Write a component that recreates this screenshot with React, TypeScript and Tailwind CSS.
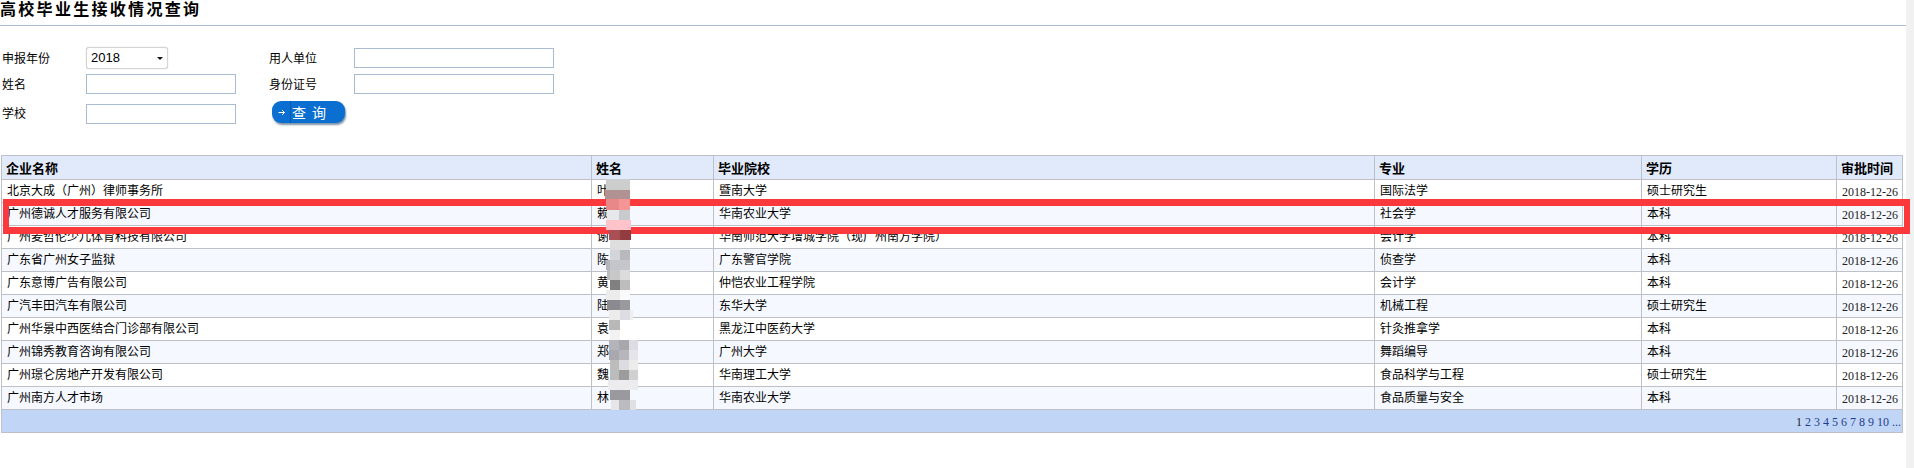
const FONT = "font-['Noto_Sans_CJK_SC','Liberation_Sans',sans-serif]";

const ROWS = [
  ['北京大成（广州）律师事务所', '叶', '暨南大学', '国际法学', '硕士研究生'],
  ['广州德诚人才服务有限公司', '赖', '华南农业大学', '社会学', '本科'],
  ['广州麦哲伦少儿体育科技有限公司', '谢', '华南师范大学增城学院（现广州南方学院）', '会计学', '本科'],
  ['广东省广州女子监狱', '陈', '广东警官学院', '侦查学', '本科'],
  ['广东意博广告有限公司', '黄', '仲恺农业工程学院', '会计学', '本科'],
  ['广汽丰田汽车有限公司', '陆', '东华大学', '机械工程', '硕士研究生'],
  ['广州华景中西医结合门诊部有限公司', '袁', '黑龙江中医药大学', '针灸推拿学', '本科'],
  ['广州锦秀教育咨询有限公司', '郑', '广州大学', '舞蹈编导', '本科'],
  ['广州璟仑房地产开发有限公司', '魏', '华南理工大学', '食品科学与工程', '硕士研究生'],
  ['广州南方人才市场', '林', '华南农业大学', '食品质量与安全', '本科'],
];

const HEADERS = ['企业名称', '姓名', '毕业院校', '专业', '学历', '审批时间'];

// mosaic over the names: [x, y, width, height, colour], page coordinates minus the svg origin (600,175)
const MOSAIC: [number, number, number, number, string][] = [
  [6, 4, 24, 11, '#cccdcd'],
  [5, 15, 25, 9, '#b09292'],
  [6, 24, 13, 11, '#e88888'],
  [19, 24, 11, 11, '#f59595'],
  [7, 35, 12, 10, '#e6e8ec'],
  [19, 35, 11, 10, '#c8cacd'],
  [6, 45, 25, 10, '#fcc4ca'],
  [9, 55, 11, 10, '#a85055'],
  [20, 55, 11, 10, '#923c40'],
  [10, 65, 20, 10, '#dedede'],
  [10, 75, 10, 10, '#d4d5da'],
  [20, 75, 10, 10, '#b8b9bc'],
  [6, 85, 4, 10, '#b4b4b9'],
  [10, 85, 20, 10, '#c5c6cc'],
  [7, 95, 3, 10, '#bbbbbb'],
  [10, 95, 10, 10, '#c8c8c8'],
  [20, 95, 10, 10, '#dcdcdc'],
  [10, 105, 10, 10, '#808080'],
  [20, 105, 10, 10, '#bdbdbd'],
  [6, 115, 14, 10, '#ececec'],
  [20, 115, 10, 10, '#fafafc'],
  [7, 125, 13, 10, '#8a8a90'],
  [20, 125, 10, 10, '#9a9a9e'],
  [9, 135, 11, 10, '#ececec'],
  [20, 135, 10, 10, '#dcdce2'],
  [30, 135, 3, 10, '#eeeeee'],
  [9, 145, 11, 10, '#b8b8b8'],
  [10, 155, 10, 10, '#f2f2f2'],
  [9, 165, 10, 10, '#b4b4ba'],
  [19, 165, 10, 10, '#a8a8ac'],
  [29, 165, 9, 10, '#dcdce2'],
  [9, 175, 10, 10, '#a8a8ae'],
  [19, 175, 10, 10, '#b6b6bc'],
  [29, 175, 9, 10, '#e4e4ea'],
  [10, 185, 9, 10, '#bcbcbc'],
  [19, 185, 10, 10, '#dcdce0'],
  [29, 185, 9, 10, '#ececec'],
  [10, 195, 9, 10, '#bcbcbc'],
  [19, 195, 10, 10, '#9c9c9c'],
  [29, 195, 9, 10, '#d0d0d0'],
  [8, 205, 30, 10, '#ececee'],
  [10, 215, 20, 10, '#9a9a9e'],
  [11, 225, 9, 10, '#e6e6e8'],
  [19, 225, 11, 10, '#bcbcc0'],
  [30, 225, 6, 10, '#dfe0e2'],
];

function Field({ className }: { className: string }) {
  return <input type="text" className={`h-5 border border-[#a9bcd3] bg-white ${className}`} />;
}

function Label({ text, className = '' }: { text: string; className?: string }) {
  return <span className={`self-center text-[12px] leading-none text-black ${className}`}>{text}</span>;
}

export default function App() {
  return (
    <div className={`relative flex h-[468px] w-[1914px] overflow-hidden bg-white ${FONT}`}>
      <div className="w-[1906px]">
        <h1 className="h-[26px] border-b border-[#a9bcd0] text-[16px] font-bold leading-[17px] tracking-[2.3px] text-black">
          高校毕业生接收情况查询
        </h1>

        <form className="mt-[21px] grid grid-cols-[84px_183px_85px_200px] grid-rows-[22px_20px_25px] gap-y-[5px] pl-[2px]">
          <Label text="申报年份" />
          <div className="relative h-[22px] w-[82px]">
            <select className="block h-full w-full appearance-none rounded-[3px] border border-[#d4d4d4] bg-white pl-[4px] font-['Liberation_Sans',sans-serif] text-[13px] text-black shadow-[0_0_1px_#bbbbbb]">
              <option>2018</option>
            </select>
            <svg className="pointer-events-none absolute right-[5px] top-[10px] h-[3px] w-[6px]" viewBox="0 0 6 3">
              <path d="M0 0h6L3 3z" fill="#111111" />
            </svg>
          </div>
          <Label text="用人单位" />
          <Field className="mt-px w-[200px]" />

          <Label text="姓名" />
          <Field className="w-[150px]" />
          <Label text="身份证号" />
          <Field className="w-[200px]" />

          <Label text="学校" className="pt-[3px]" />
          <Field className="w-[150px] self-end" />
          <div className="col-span-2 ml-[3px] self-start">
            <button
              type="button"
              className="mt-[2px] flex h-[22px] w-[73px] items-center rounded-[9px] bg-[#0a6fd1] text-white shadow-[1px_2px_2px_#7f93a6]"
            >
              <span className="flex h-full w-[19px] items-center justify-center border-r border-[#0658a8]">
                <svg className="h-[7px] w-[7px]" viewBox="0 0 7 7" fill="none" stroke="#ffffff" strokeWidth="1">
                  <path d="M0.5 3.5h6M4 1l2.5 2.5L4 6" />
                </svg>
              </span>
              <span className="pl-px text-[14px] leading-none tracking-[6px]">查询</span>
            </button>
          </div>
        </form>

        <table className="ml-px mt-[31px] w-[1901px] table-fixed border-collapse text-[12px] leading-none text-black">
          <colgroup>
            <col className="w-[590px]" />
            <col className="w-[122px]" />
            <col className="w-[661px]" />
            <col className="w-[267px]" />
            <col className="w-[195px]" />
            <col className="w-[66px]" />
          </colgroup>
          <thead>
            <tr className="h-[24px] bg-[#e1eafa]">
              {HEADERS.map((h) => (
                <th key={h} className="border border-[#bdc1c7] px-[4px] text-left text-[13px] font-bold">
                  {h}
                </th>
              ))}
            </tr>
          </thead>
          <tbody>
            {ROWS.map((row, i) => (
              <tr key={row[0]} className={`h-[23px] ${i % 2 === 1 ? 'bg-[#f5f8fe]' : 'bg-white'}`}>
                {row.map((cell, j) => (
                  <td key={j} className="overflow-hidden whitespace-nowrap border border-[#bdc1c7] px-[5px] pb-[2px]">
                    {cell}
                  </td>
                ))}
                <td className="whitespace-nowrap border border-[#bdc1c7] px-[5px] pt-[2px] font-['Liberation_Serif',serif] text-[12px] text-[#222222]">
                  2018-12-26
                </td>
              </tr>
            ))}
          </tbody>
          <tfoot>
            <tr className="h-[23px] bg-[#c1d5f7]">
              <td colSpan={6} className="border border-[#bdc1c7] pr-px pt-[2px] text-right font-['Liberation_Serif',serif] text-[12px] text-[#1f3f8f]">
                <span className="text-[#222222]">1</span> 2 3 4 5 6 7 8 9 10 ...
              </td>
            </tr>
          </tfoot>
        </table>
      </div>

      {/* scrollbar track */}
      <div className="h-full w-2 bg-[#f1f1f1]" />

      {/* red annotation box drawn over the table */}
      <div className="absolute left-[3px] top-[199px] h-[35px] w-[1907px] border-x-[6px] border-y-[7px] border-[#fb383c]" />

      {/* pixelated name mask */}
      <svg className="absolute left-[600px] top-[175px] h-[235px] w-[40px]" viewBox="0 0 40 235" shapeRendering="crispEdges">
        {MOSAIC.map(([x, y, w, h, c], i) => (
          <rect key={i} x={x} y={y} width={w} height={h} fill={c} />
        ))}
      </svg>
    </div>
  );
}
